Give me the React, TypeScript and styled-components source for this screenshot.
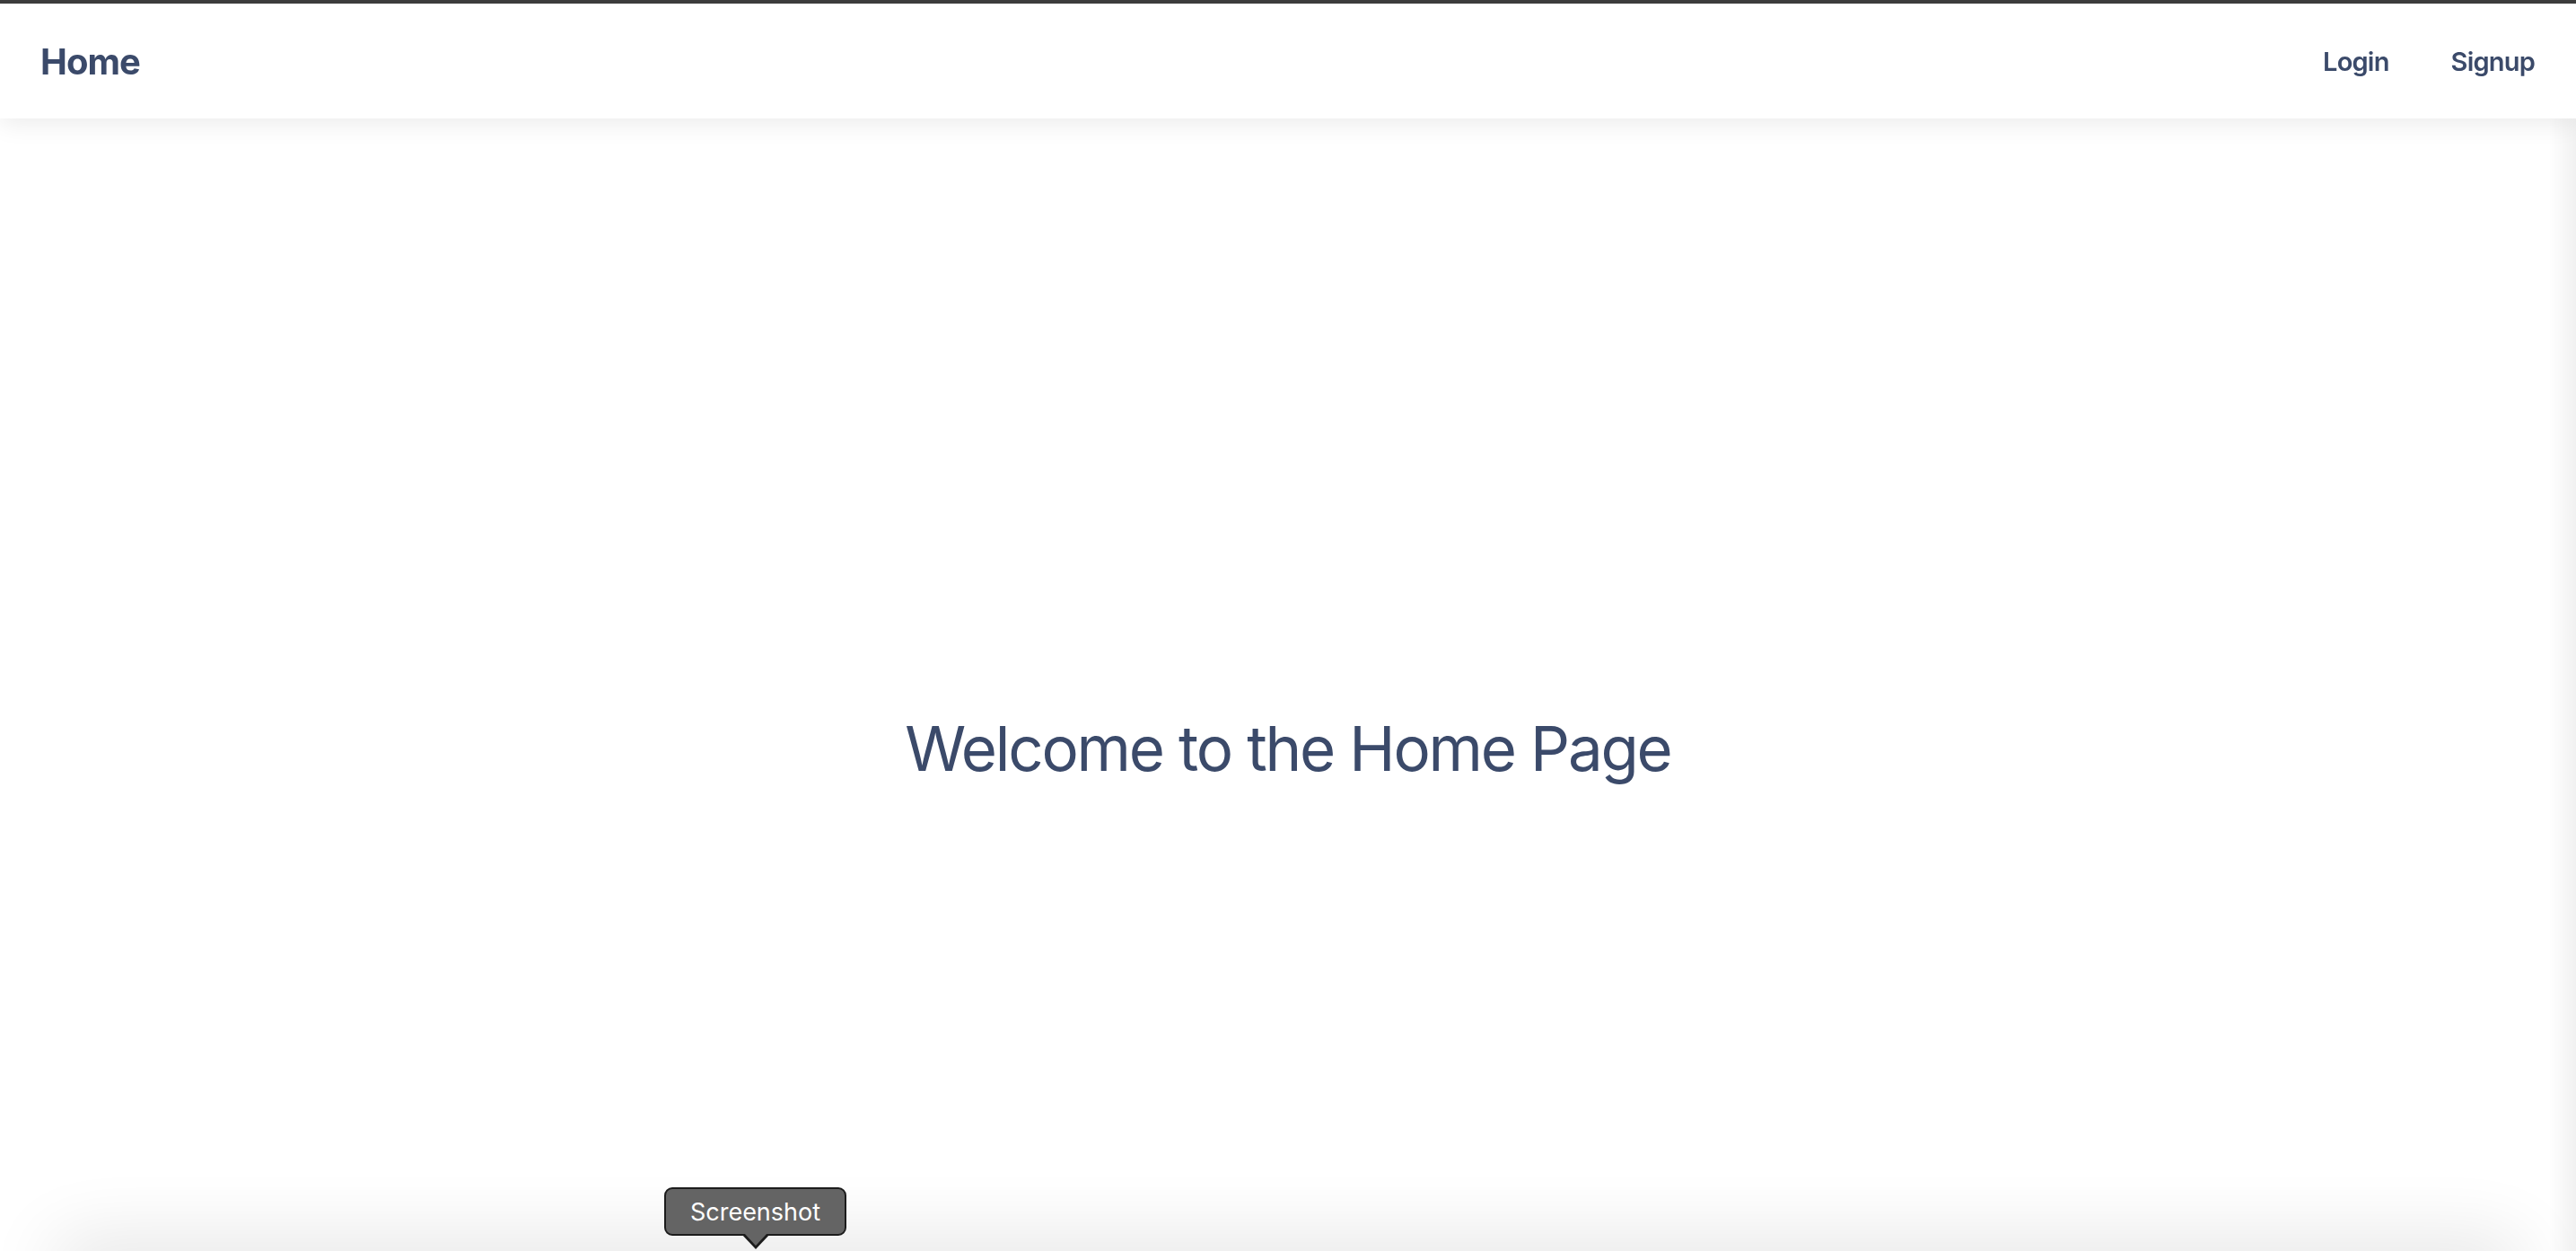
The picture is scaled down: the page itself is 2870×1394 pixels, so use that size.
import React from 'react'
import styled, { createGlobalStyle } from 'styled-components'

const GlobalStyle = createGlobalStyle`
  html, body {
    margin: 0;
    padding: 0;
    background: #ffffff;
    font-family: Inter, "Liberation Sans", Arial, sans-serif;
    -webkit-font-smoothing: antialiased;
  }
  * { box-sizing: border-box; }
`

const Page = styled.div`
  min-height: 100vh;
  display: flex;
  flex-direction: column;
  overflow: hidden;
`

const Navbar = styled.nav`
  position: relative;
  z-index: 1;
  height: 132px;
  border-top: 4px solid #3c3c3c;
  background: #ffffff;
  display: flex;
  align-items: center;
  justify-content: space-between;
  padding: 0 46px 0 45px;
  box-shadow: 0 6px 26px rgba(0, 0, 0, 0.08);
`

const Brand = styled.a`
  font-size: 40px;
  font-weight: 700;
  color: #3b4a6a;
  letter-spacing: -1px;
  text-decoration: none;
  cursor: pointer;
`

const Links = styled.div`
  display: flex;
  align-items: center;
  gap: 69px;
`

const NavLink = styled.a`
  font-size: 29px;
  font-weight: 600;
  color: #3b4a6a;
  letter-spacing: -0.8px;
  text-decoration: none;
  cursor: pointer;
`

const Main = styled.main`
  flex: 1;
  display: flex;
  align-items: center;
  justify-content: center;
  padding-top: 142px;
`

const Heading = styled.h1`
  margin: 0;
  font-size: 69px;
  font-weight: 400;
  line-height: 80px;
  color: #3b4a6a;
  letter-spacing: -2.2px;
`

/* screen-capture chrome lying over the page */
const BottomShade = styled.div`
  position: fixed;
  left: 70px;
  right: 70px;
  bottom: -40px;
  height: 40px;
  border-radius: 40px;
  background: #dcdcdc;
  box-shadow: 0 0 80px 14px rgba(0, 0, 0, 0.11);
  pointer-events: none;
`

const EdgeShade = styled.div`
  position: fixed;
  top: 4px;
  right: 0;
  width: 30px;
  height: 100%;
  background: linear-gradient(to right, rgba(0, 0, 0, 0), rgba(0, 0, 0, 0.055));
  pointer-events: none;
`

const Tooltip = styled.div`
  position: fixed;
  left: 740px;
  top: 1323px;
  width: 203px;
  height: 54px;
  border: 2px solid #1c1c1c;
  border-radius: 9px;
  background: #646464;
  color: #ffffff;
  font-size: 27px;
  display: flex;
  align-items: center;
  justify-content: center;

  &::before,
  &::after {
    content: '';
    position: absolute;
    left: 50%;
    width: 0;
    height: 0;
    border-left: 16px solid transparent;
    border-right: 16px solid transparent;
    transform: translateX(-50%);
  }
  &::before {
    top: 100%;
    border-top: 17px solid #1c1c1c;
  }
  &::after {
    top: calc(100% - 1px);
    border-left-width: 13px;
    border-right-width: 13px;
    border-top: 14px solid #646464;
  }
`

export default function App() {
  return (
    <>
      <GlobalStyle />
      <Page>
        <Navbar>
          <Brand>Home</Brand>
          <Links>
            <NavLink>Login</NavLink>
            <NavLink>Signup</NavLink>
          </Links>
        </Navbar>
        <Main>
          <Heading>Welcome to the Home Page</Heading>
        </Main>
      </Page>
      <BottomShade />
      <EdgeShade />
      <Tooltip>Screenshot</Tooltip>
    </>
  )
}
